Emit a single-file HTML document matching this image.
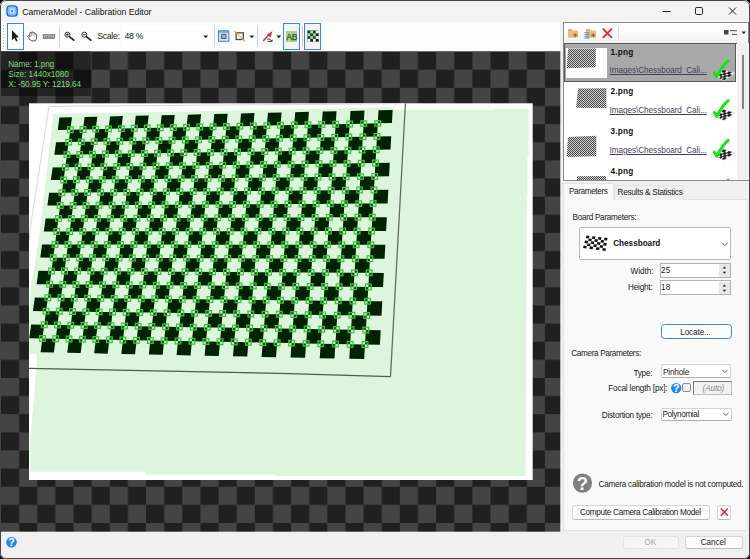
<!DOCTYPE html>
<html><head><meta charset="utf-8"><title>CameraModel - Calibration Editor</title>
<style>
html,body{margin:0;padding:0;background:#000;}
body{width:750px;height:559px;overflow:hidden;position:relative;font-family:"Liberation Sans",sans-serif;font-size:11px;color:#1a1a1a;}
#win{position:absolute;left:0;top:0;width:750px;height:559px;border-radius:6px;background:#f0f0f0;overflow:hidden;}
.abs{position:absolute;}
.t{position:absolute;white-space:nowrap;line-height:14px;height:14px;margin-top:-7px;}
.tr{position:absolute;white-space:nowrap;line-height:14px;height:14px;margin-top:-7px;text-align:right;}
#titlebar{position:absolute;left:0;top:0;width:750px;height:22px;background:#f3f3f3;}
#toolbar{position:absolute;left:0;top:22px;width:560.3px;height:29.3px;background:#fcfcfc;}
.sep{position:absolute;width:1px;background:#d0d0d0;top:26px;height:21px;}
.selbtn{position:absolute;border:1px solid #2f8ae0;background:#fdfeff;box-sizing:border-box;}
.btn{position:absolute;box-sizing:border-box;border:1px solid #d4d4d4;border-bottom-color:#bcbcbc;border-radius:3px;background:#fdfdfd;text-align:center;}
.combo{position:absolute;box-sizing:border-box;border:1px solid #d2d2d2;border-bottom-color:#b0b0b0;border-radius:2px;background:#fff;}
.link{color:#483f55;text-decoration:underline;}
</style></head><body>
<div id="win">
<div id="titlebar"></div>
<div id="toolbar"></div>
<svg class="cv" width="750" height="559" viewBox="0 0 750 559" style="position:absolute;left:0;top:0">
<defs><pattern id="ck" x="1.0" y="51.599999999999994" width="36.26" height="36.26" patternUnits="userSpaceOnUse"><rect width="36.26" height="36.26" fill="#444444"/><rect x="18.13" width="18.13" height="18.13" fill="#202020"/><rect y="18.13" width="18.13" height="18.13" fill="#202020"/></pattern><filter id="bl" x="-5%" y="-5%" width="110%" height="110%"><feGaussianBlur stdDeviation="0.7"/></filter><clipPath id="cc"><rect x="0.7" y="51.3" width="559.5999999999999" height="480.40000000000003"/></clipPath></defs>
<rect x="0.7" y="51.3" width="559.6" height="480.4" fill="url(#ck)"/>
<rect x="29" y="103.3" width="503.7" height="376.7" fill="#ffffff"/>
<polygon fill="#ddf5dc" points="53.5,114 394,107.2 394,110 493,110 493,108.8 528.7,108.8 528.7,157 527.5,157 527.5,196 526.7,196 526.4,300 525.8,476 275,476 275,474.7 145,474.7 145,471.8 30.2,471.8 30.5,441 32.1,418 34.4,395 36,369.5 36.8,369.5 36.8,354 29.4,354 29.4,318 31.3,284 38.7,240"/>
<polyline fill="none" stroke="#dcdedc" stroke-width="1.2" points="29.5,240 30,230 49,106.4 405.4,103.6"/>
<polyline fill="none" stroke="#626e62" stroke-width="1.3" points="405.4,103.5 397.4,250 390.5,376.7"/>
<polyline fill="none" stroke="#4f5b4f" stroke-width="1.3" points="29,368.3 280,373.4 390.5,376.7"/>
<path filter="url(#bl)" fill="#052005" d="M59.41,117.57 71.98,117.29 70.33,129.66 57.72,129.92zM56.03,142.33 68.67,142.1 67,154.63 54.32,154.83zM52.6,167.4 65.31,167.23 63.62,179.91 50.87,180.05zM49.13,192.78 61.91,192.66 60.2,205.5 47.38,205.58zM45.62,218.47 58.47,218.42 56.73,231.42 43.84,231.44zM42.06,244.49 54.99,244.5 53.23,257.66 40.26,257.62zM38.46,270.83 51.46,270.91 49.68,284.24 36.64,284.13zM34.81,297.52 47.88,297.66 46.08,311.16 32.97,310.98zM31.11,324.54 44.26,324.75 42.43,338.43 29.25,338.18zM70.33,129.66 83,129.4 81.37,141.87 68.67,142.1zM67,154.63 79.73,154.42 78.08,167.05 65.31,167.23zM63.62,179.91 76.43,179.76 74.76,192.55 61.91,192.66zM60.2,205.5 73.08,205.42 71.39,218.37 58.47,218.42zM56.73,231.42 69.69,231.4 67.98,244.51 54.99,244.5zM53.23,257.66 66.25,257.71 64.52,270.99 51.46,270.91zM49.68,284.24 62.78,284.35 61.02,297.81 47.88,297.66zM46.08,311.16 59.25,311.34 57.48,324.97 44.26,324.75zM42.43,338.43 55.69,338.68 53.89,352.48 40.59,352.2zM84.62,117 97.31,116.71 95.73,129.14 83,129.4zM81.37,141.87 94.13,141.64 92.53,154.22 79.73,154.42zM78.08,167.05 90.92,166.88 89.3,179.62 76.43,179.76zM74.76,192.55 87.66,192.44 86.02,205.34 73.08,205.42zM71.39,218.37 84.37,218.32 82.7,231.38 69.69,231.4zM67.98,244.51 81.03,244.53 79.35,257.76 66.25,257.71zM64.52,270.99 77.65,271.07 75.94,284.47 62.78,284.35zM61.02,297.81 74.23,297.95 72.5,311.52 59.25,311.34zM57.48,324.97 70.76,325.18 69.01,338.93 55.69,338.68zM95.73,129.14 108.52,128.87 106.96,141.41 94.13,141.64zM92.53,154.22 105.39,154.02 103.82,166.71 90.92,166.88zM89.3,179.62 102.23,179.48 100.63,192.33 87.66,192.44zM86.02,205.34 99.03,205.26 97.41,218.27 84.37,218.32zM82.7,231.38 95.79,231.36 94.15,244.54 81.03,244.53zM79.35,257.76 92.5,257.8 90.84,271.15 77.65,271.07zM75.94,284.47 89.17,284.58 87.5,298.1 74.23,297.95zM72.5,311.52 85.81,311.7 84.1,325.4 70.76,325.18zM69.01,338.93 82.39,339.18 80.67,353.05 67.24,352.77zM110.06,116.42 122.88,116.12 121.37,128.61 108.52,128.87zM106.96,141.41 119.85,141.17 118.32,153.81 105.39,154.02zM103.82,166.71 116.78,166.53 115.23,179.33 102.23,179.48zM100.63,192.33 113.67,192.21 112.1,205.17 99.03,205.26zM97.41,218.27 110.52,218.22 108.93,231.34 95.79,231.36zM94.15,244.54 107.33,244.55 105.72,257.85 92.5,257.8zM90.84,271.15 104.1,271.23 102.47,284.69 89.17,284.58zM87.5,298.1 100.83,298.25 99.18,311.89 85.81,311.7zM84.1,325.4 97.52,325.61 95.85,339.43 82.39,339.18zM121.37,128.61 134.28,128.34 132.79,140.94 119.85,141.17zM118.32,153.81 131.3,153.61 129.8,166.36 116.78,166.53zM115.23,179.33 128.29,179.19 126.76,192.1 113.67,192.21zM112.1,205.17 125.23,205.09 123.69,218.17 110.52,218.22zM108.93,231.34 122.14,231.33 120.58,244.57 107.33,244.55zM105.72,257.85 119.01,257.9 117.43,271.31 104.1,271.23zM102.47,284.69 115.84,284.81 114.24,298.39 100.83,298.25zM99.18,311.89 112.62,312.07 111,325.83 97.52,325.61zM95.85,339.43 109.37,339.69 107.72,353.63 94.16,353.34zM135.75,115.83 148.69,115.53 147.25,128.08 134.28,128.34zM132.79,140.94 145.8,140.7 144.35,153.4 131.3,153.61zM129.8,166.36 142.88,166.18 141.41,179.04 128.29,179.19zM126.76,192.1 139.92,191.98 138.43,205.01 125.23,205.09zM123.69,218.17 136.93,218.12 135.42,231.31 122.14,231.33zM120.58,244.57 133.89,244.58 132.36,257.94 119.01,257.9zM117.43,271.31 130.82,271.39 129.27,284.92 115.84,284.81zM114.24,298.39 127.71,298.54 126.13,312.25 112.62,312.07zM111,325.83 124.55,326.05 122.96,339.94 109.37,339.69zM147.25,128.08 160.29,127.81 158.88,140.46 145.8,140.7zM144.35,153.4 157.46,153.19 156.03,166 142.88,166.18zM141.41,179.04 154.59,178.9 153.15,191.87 139.92,191.98zM138.43,205.01 151.69,204.93 150.23,218.06 136.93,218.12zM135.42,231.31 148.76,231.29 147.27,244.6 133.89,244.58zM132.36,257.94 145.78,257.99 144.28,271.47 130.82,271.39zM129.27,284.92 142.77,285.04 141.24,298.69 127.71,298.54zM126.13,312.25 139.71,312.44 138.17,326.27 124.55,326.05zM122.96,339.94 136.62,340.2 135.06,354.21 121.36,353.92zM161.69,115.24 174.75,114.94 173.39,127.54 160.29,127.81zM158.88,140.46 172.02,140.22 170.63,152.98 157.46,153.19zM156.03,166 169.24,165.83 167.85,178.75 154.59,178.9zM153.15,191.87 166.44,191.75 165.02,204.84 151.69,204.93zM150.23,218.06 163.6,218.01 162.16,231.27 148.76,231.29zM147.27,244.6 160.72,244.61 159.27,258.04 145.78,257.99zM144.28,271.47 157.8,271.55 156.33,285.15 142.77,285.04zM141.24,298.69 154.85,298.84 153.36,312.62 139.71,312.44zM138.17,326.27 151.86,326.49 150.35,340.46 136.62,340.2zM173.39,127.54 186.55,127.27 185.22,139.98 172.02,140.22zM170.63,152.98 183.87,152.77 182.52,165.65 169.24,165.83zM167.85,178.75 181.16,178.6 179.79,191.64 166.44,191.75zM165.02,204.84 178.42,204.76 177.03,217.96 163.6,218.01zM162.16,231.27 175.64,231.25 174.23,244.62 160.72,244.61zM159.27,258.04 172.82,258.08 171.4,271.63 157.8,271.55zM156.33,285.15 169.97,285.27 168.52,298.99 154.85,298.84zM153.36,312.62 167.07,312.81 165.61,326.72 151.86,326.49zM150.35,340.46 164.15,340.71 162.67,354.8 148.83,354.51zM187.88,114.64 201.07,114.34 199.78,127 186.55,127.27zM185.22,139.98 198.48,139.74 197.18,152.56 183.87,152.77zM182.52,165.65 195.87,165.47 194.54,178.45 181.16,178.6zM179.79,191.64 193.22,191.52 191.88,204.67 178.42,204.76zM177.03,217.96 190.53,217.91 189.18,231.23 175.64,231.25zM174.23,244.62 187.81,244.64 186.44,258.13 172.82,258.08zM171.4,271.63 185.06,271.71 183.67,285.39 169.97,285.27zM168.52,298.99 182.27,299.15 180.86,313 167.07,312.81zM165.61,326.72 179.44,326.94 178.02,340.97 164.15,340.71zM199.78,127 213.07,126.73 211.81,139.5 198.48,139.74zM197.18,152.56 210.55,152.35 209.27,165.29 195.87,165.47zM194.54,178.45 207.99,178.3 206.7,191.4 193.22,191.52zM191.88,204.67 205.41,204.59 204.1,217.86 190.53,217.91zM189.18,231.23 202.79,231.21 201.46,244.65 187.81,244.64zM186.44,258.13 200.13,258.18 198.79,271.8 185.06,271.71zM183.67,285.39 197.44,285.5 196.08,299.3 182.27,299.15zM180.86,313 194.72,313.19 193.34,327.16 179.44,326.94zM178.02,340.97 191.96,341.24 190.56,355.4 176.58,355.1zM214.32,114.04 227.64,113.73 226.43,126.45 213.07,126.73zM211.81,139.5 225.21,139.25 223.98,152.14 210.55,152.35zM209.27,165.29 222.75,165.1 221.51,178.15 207.99,178.3zM206.7,191.4 220.26,191.28 219,204.5 205.41,204.59zM204.1,217.86 217.74,217.8 216.46,231.19 202.79,231.21zM201.46,244.65 215.18,244.67 213.89,258.23 200.13,258.18zM198.79,271.8 212.59,271.88 211.28,285.62 197.44,285.5zM196.08,299.3 209.97,299.45 208.64,313.38 194.72,313.19zM193.34,327.16 207.31,327.39 205.97,341.5 191.96,341.24zM226.43,126.45 239.85,126.18 238.67,139.01 225.21,139.25zM223.98,152.14 237.48,151.92 236.29,164.92 222.75,165.1zM221.51,178.15 235.09,178 233.88,191.17 220.26,191.28zM219,204.5 232.66,204.42 231.44,217.75 217.74,217.8zM216.46,231.19 230.21,231.17 228.97,244.68 215.18,244.67zM213.89,258.23 227.72,258.28 226.46,271.96 212.59,271.88zM211.28,285.62 225.2,285.74 223.92,299.61 209.97,299.45zM208.64,313.38 222.64,313.57 221.35,327.62 207.31,327.39zM205.97,341.5 220.05,341.76 218.75,356 204.62,355.7zM241.02,113.43 254.47,113.12 253.34,125.9 239.85,126.18zM238.67,139.01 252.2,138.76 251.05,151.71 237.48,151.92zM236.29,164.92 249.9,164.74 248.74,177.85 235.09,178zM233.88,191.17 247.57,191.05 246.4,204.33 232.66,204.42zM231.44,217.75 245.21,217.7 244.02,231.15 230.21,231.17zM228.97,244.68 242.82,244.69 241.62,258.33 227.72,258.28zM226.46,271.96 240.4,272.05 239.18,285.86 225.2,285.74zM223.92,299.61 237.95,299.76 236.71,313.76 222.64,313.57zM221.35,327.62 235.47,327.85 234.21,342.03 220.05,341.76zM253.34,125.9 266.89,125.62 265.79,138.52 252.2,138.76zM251.05,151.71 264.69,151.49 263.58,164.55 249.9,164.74zM248.74,177.85 262.46,177.7 261.33,190.93 247.57,191.05zM246.4,204.33 260.2,204.24 259.05,217.64 245.21,217.7zM244.02,231.15 257.91,231.13 256.75,244.71 242.82,244.69zM241.62,258.33 255.59,258.38 254.42,272.13 240.4,272.05zM239.18,285.86 253.24,285.98 252.05,299.92 237.95,299.76zM236.71,313.76 250.85,313.95 249.65,328.08 235.47,327.85zM234.21,342.03 248.44,342.3 247.22,356.61 232.95,356.31zM267.98,112.81 281.56,112.5 280.51,125.34 266.89,125.62zM265.79,138.52 279.45,138.27 278.39,151.28 264.69,151.49zM263.58,164.55 277.32,164.37 276.24,177.54 262.46,177.7zM261.33,190.93 275.16,190.81 274.07,204.15 260.2,204.24zM259.05,217.64 272.97,217.59 271.86,231.11 257.91,231.13zM256.75,244.71 270.75,244.72 269.63,258.43 255.59,258.38zM254.42,272.13 268.5,272.22 267.36,286.1 253.24,285.98zM252.05,299.92 266.22,300.08 265.07,314.14 250.85,313.95zM249.65,328.08 263.91,328.31 262.75,342.57 248.44,342.3zM280.51,125.34 294.2,125.06 293.18,138.02 279.45,138.27zM278.39,151.28 292.16,151.06 291.13,164.18 277.32,164.37zM276.24,177.54 290.1,177.39 289.05,190.69 275.16,190.81zM274.07,204.15 288.01,204.07 286.95,217.54 272.97,217.59zM271.86,231.11 285.89,231.09 284.82,244.74 270.75,244.72zM269.63,258.43 283.74,258.47 282.66,272.3 268.5,272.22zM267.36,286.1 281.56,286.22 280.47,300.23 266.22,300.08zM265.07,314.14 279.36,314.34 278.25,328.54 263.91,328.31zM262.75,342.57 277.13,342.83 276,357.23 261.57,356.92zM295.21,112.19 308.92,111.87 307.96,124.78 294.2,125.06zM293.18,138.02 306.98,137.77 306,150.84 292.16,151.06zM291.13,164.18 305.01,163.99 304.02,177.24 290.1,177.39zM289.05,190.69 303.02,190.56 302.02,203.98 288.01,204.07zM286.95,217.54 301,217.48 299.98,231.07 285.89,231.09zM284.82,244.74 298.96,244.75 297.92,258.52 283.74,258.47zM282.66,272.3 296.88,272.39 295.84,286.34 281.56,286.22zM280.47,300.23 294.78,300.39 293.72,314.53 279.36,314.34zM278.25,328.54 292.66,328.77 291.58,343.11 277.13,342.83zM307.96,124.78 321.78,124.5 320.85,137.51 306.98,137.77zM306,150.84 319.91,150.62 318.97,163.81 305.01,163.99zM304.02,177.24 318.02,177.08 317.06,190.44 303.02,190.56zM302.02,203.98 316.1,203.89 315.13,217.43 301,217.48zM299.98,231.07 314.15,231.05 313.17,244.77 298.96,244.75zM297.92,258.52 312.18,258.57 311.19,272.47 296.88,272.39zM295.84,286.34 310.18,286.47 309.18,300.55 294.78,300.39zM293.72,314.53 308.16,314.73 307.14,329.01 292.66,328.77zM291.58,343.11 306.11,343.38 305.07,357.85 290.5,357.54zM322.71,111.56 336.56,111.24 335.67,124.21 321.78,124.5zM320.85,137.51 334.78,137.26 333.89,150.4 319.91,150.62zM318.97,163.81 332.99,163.62 332.08,176.92 318.02,177.08zM317.06,190.44 331.17,190.32 330.25,203.8 316.1,203.89zM315.13,217.43 329.32,217.37 328.39,231.03 314.15,231.05zM313.17,244.77 327.46,244.78 326.51,258.63 312.18,258.57zM311.19,272.47 325.56,272.56 324.61,286.59 310.18,286.47zM309.18,300.55 323.64,300.71 322.67,314.93 308.16,314.73zM307.14,329.01 321.7,329.24 320.72,343.65 306.11,343.38zM335.67,124.21 349.64,123.92 348.79,137.01 334.78,137.26zM333.89,150.4 347.94,150.17 347.08,163.43 332.99,163.62zM332.08,176.92 346.22,176.77 345.35,190.2 331.17,190.32zM330.25,203.8 344.47,203.71 343.59,217.32 329.32,217.37zM328.39,231.03 342.71,231.01 341.81,244.8 327.46,244.78zM326.51,258.63 340.92,258.68 340.01,272.65 325.56,272.56zM324.61,286.59 339.1,286.71 338.19,300.87 323.64,300.71zM322.67,314.93 337.26,315.13 336.34,329.48 321.7,329.24zM320.72,343.65 335.4,343.93 334.46,358.48 319.73,358.16zM350.48,110.93 364.47,110.61 363.67,123.64 349.64,123.92zM348.79,137.01 362.87,136.75 362.06,149.95 347.94,150.17zM347.08,163.43 361.24,163.24 360.42,176.61 346.22,176.77zM345.35,190.2 359.6,190.07 358.77,203.62 344.47,203.71zM343.59,217.32 357.94,217.26 357.09,230.99 342.71,231.01zM341.81,244.8 356.25,244.81 355.4,258.73 340.92,258.68zM340.01,272.65 354.54,272.73 353.67,286.84 339.1,286.71zM338.19,300.87 352.81,301.03 351.93,315.33 337.26,315.13zM336.34,329.48 351.05,329.72 350.16,344.21 335.4,343.93zM363.67,123.64 377.77,123.35 377.01,136.49 362.87,136.75zM362.06,149.95 376.25,149.73 375.48,163.04 361.24,163.24zM360.42,176.61 374.71,176.45 373.93,189.95 359.6,190.07zM358.77,203.62 373.14,203.53 372.35,217.2 357.94,217.26zM357.09,230.99 371.56,230.97 370.76,244.83 356.25,244.81zM355.4,258.73 369.95,258.78 369.14,272.82 354.54,272.73zM353.67,286.84 368.32,286.96 367.5,301.2 352.81,301.03zM351.93,315.33 366.67,315.53 365.84,329.96 351.05,329.72zM350.16,344.21 365,344.48 364.16,359.11 349.27,358.79zM378.53,110.28 392.66,109.96 391.95,123.06 377.77,123.35zM377.01,136.49 391.23,136.23 390.51,149.5 376.25,149.73zM375.48,163.04 389.79,162.85 389.06,176.29 374.71,176.45zM373.93,189.95 388.32,189.82 387.59,203.44 373.14,203.53zM372.35,217.2 386.84,217.15 386.09,230.95 371.56,230.97zM370.76,244.83 385.34,244.84 384.58,258.83 369.95,258.78zM369.14,272.82 383.82,272.91 383.05,287.09 368.32,286.96zM367.5,301.2 382.27,301.36 381.49,315.73 366.67,315.53zM365.84,329.96 380.71,330.2 379.92,344.76 365,344.48z"/>
<path fill="#8fe88f" fill-opacity="0.22" stroke="#2fcc2f" stroke-width="1.25" d="M67.48,126.81h5.7v5.7h-5.7zM65.82,139.25h5.7v5.7h-5.7zM64.15,151.78h5.7v5.7h-5.7zM62.46,164.38h5.7v5.7h-5.7zM60.77,177.06h5.7v5.7h-5.7zM59.06,189.81h5.7v5.7h-5.7zM57.35,202.65h5.7v5.7h-5.7zM55.62,215.57h5.7v5.7h-5.7zM53.88,228.57h5.7v5.7h-5.7zM52.14,241.65h5.7v5.7h-5.7zM50.38,254.81h5.7v5.7h-5.7zM48.61,268.06h5.7v5.7h-5.7zM46.83,281.39h5.7v5.7h-5.7zM45.03,294.81h5.7v5.7h-5.7zM43.23,308.31h5.7v5.7h-5.7zM41.41,321.9h5.7v5.7h-5.7zM39.58,335.58h5.7v5.7h-5.7zM80.15,126.55h5.7v5.7h-5.7zM78.52,139.02h5.7v5.7h-5.7zM76.88,151.57h5.7v5.7h-5.7zM75.23,164.2h5.7v5.7h-5.7zM73.58,176.91h5.7v5.7h-5.7zM71.91,189.7h5.7v5.7h-5.7zM70.23,202.57h5.7v5.7h-5.7zM68.54,215.52h5.7v5.7h-5.7zM66.84,228.55h5.7v5.7h-5.7zM65.13,241.66h5.7v5.7h-5.7zM63.4,254.86h5.7v5.7h-5.7zM61.67,268.14h5.7v5.7h-5.7zM59.93,281.5h5.7v5.7h-5.7zM58.17,294.96h5.7v5.7h-5.7zM56.4,308.49h5.7v5.7h-5.7zM54.63,322.12h5.7v5.7h-5.7zM52.84,335.83h5.7v5.7h-5.7zM92.88,126.29h5.7v5.7h-5.7zM91.28,138.79h5.7v5.7h-5.7zM89.68,151.37h5.7v5.7h-5.7zM88.07,164.03h5.7v5.7h-5.7zM86.45,176.77h5.7v5.7h-5.7zM84.81,189.59h5.7v5.7h-5.7zM83.17,202.49h5.7v5.7h-5.7zM81.52,215.47h5.7v5.7h-5.7zM79.85,228.53h5.7v5.7h-5.7zM78.18,241.68h5.7v5.7h-5.7zM76.5,254.91h5.7v5.7h-5.7zM74.8,268.22h5.7v5.7h-5.7zM73.09,281.62h5.7v5.7h-5.7zM71.38,295.1h5.7v5.7h-5.7zM69.65,308.67h5.7v5.7h-5.7zM67.91,322.33h5.7v5.7h-5.7zM66.16,336.08h5.7v5.7h-5.7zM105.67,126.02h5.7v5.7h-5.7zM104.11,138.56h5.7v5.7h-5.7zM102.54,151.17h5.7v5.7h-5.7zM100.97,163.86h5.7v5.7h-5.7zM99.38,176.63h5.7v5.7h-5.7zM97.78,189.48h5.7v5.7h-5.7zM96.18,202.41h5.7v5.7h-5.7zM94.56,215.42h5.7v5.7h-5.7zM92.94,228.51h5.7v5.7h-5.7zM91.3,241.69h5.7v5.7h-5.7zM89.65,254.95h5.7v5.7h-5.7zM87.99,268.3h5.7v5.7h-5.7zM86.32,281.73h5.7v5.7h-5.7zM84.65,295.25h5.7v5.7h-5.7zM82.96,308.85h5.7v5.7h-5.7zM81.25,322.55h5.7v5.7h-5.7zM79.54,336.33h5.7v5.7h-5.7zM118.52,125.76h5.7v5.7h-5.7zM117,138.32h5.7v5.7h-5.7zM115.47,150.96h5.7v5.7h-5.7zM113.93,163.68h5.7v5.7h-5.7zM112.38,176.48h5.7v5.7h-5.7zM110.82,189.36h5.7v5.7h-5.7zM109.25,202.32h5.7v5.7h-5.7zM107.67,215.37h5.7v5.7h-5.7zM106.08,228.49h5.7v5.7h-5.7zM104.48,241.7h5.7v5.7h-5.7zM102.87,255h5.7v5.7h-5.7zM101.25,268.38h5.7v5.7h-5.7zM99.62,281.84h5.7v5.7h-5.7zM97.98,295.4h5.7v5.7h-5.7zM96.33,309.04h5.7v5.7h-5.7zM94.67,322.76h5.7v5.7h-5.7zM93,336.58h5.7v5.7h-5.7zM131.43,125.49h5.7v5.7h-5.7zM129.94,138.09h5.7v5.7h-5.7zM128.45,150.76h5.7v5.7h-5.7zM126.95,163.51h5.7v5.7h-5.7zM125.44,176.34h5.7v5.7h-5.7zM123.91,189.25h5.7v5.7h-5.7zM122.38,202.24h5.7v5.7h-5.7zM120.84,215.32h5.7v5.7h-5.7zM119.29,228.48h5.7v5.7h-5.7zM117.73,241.72h5.7v5.7h-5.7zM116.16,255.05h5.7v5.7h-5.7zM114.58,268.46h5.7v5.7h-5.7zM112.99,281.96h5.7v5.7h-5.7zM111.39,295.54h5.7v5.7h-5.7zM109.77,309.22h5.7v5.7h-5.7zM108.15,322.98h5.7v5.7h-5.7zM106.52,336.84h5.7v5.7h-5.7zM144.4,125.23h5.7v5.7h-5.7zM142.95,137.85h5.7v5.7h-5.7zM141.5,150.55h5.7v5.7h-5.7zM140.03,163.33h5.7v5.7h-5.7zM138.56,176.19h5.7v5.7h-5.7zM137.07,189.13h5.7v5.7h-5.7zM135.58,202.16h5.7v5.7h-5.7zM134.08,215.27h5.7v5.7h-5.7zM132.57,228.46h5.7v5.7h-5.7zM131.04,241.73h5.7v5.7h-5.7zM129.51,255.09h5.7v5.7h-5.7zM127.97,268.54h5.7v5.7h-5.7zM126.42,282.07h5.7v5.7h-5.7zM124.86,295.69h5.7v5.7h-5.7zM123.28,309.4h5.7v5.7h-5.7zM121.7,323.2h5.7v5.7h-5.7zM120.11,337.09h5.7v5.7h-5.7zM157.44,124.96h5.7v5.7h-5.7zM156.03,137.61h5.7v5.7h-5.7zM154.61,150.34h5.7v5.7h-5.7zM153.18,163.15h5.7v5.7h-5.7zM151.74,176.05h5.7v5.7h-5.7zM150.3,189.02h5.7v5.7h-5.7zM148.84,202.08h5.7v5.7h-5.7zM147.38,215.21h5.7v5.7h-5.7zM145.91,228.44h5.7v5.7h-5.7zM144.42,241.75h5.7v5.7h-5.7zM142.93,255.14h5.7v5.7h-5.7zM141.43,268.62h5.7v5.7h-5.7zM139.92,282.19h5.7v5.7h-5.7zM138.39,295.84h5.7v5.7h-5.7zM136.86,309.59h5.7v5.7h-5.7zM135.32,323.42h5.7v5.7h-5.7zM133.77,337.35h5.7v5.7h-5.7zM170.54,124.69h5.7v5.7h-5.7zM169.17,137.37h5.7v5.7h-5.7zM167.78,150.13h5.7v5.7h-5.7zM166.39,162.98h5.7v5.7h-5.7zM165,175.9h5.7v5.7h-5.7zM163.59,188.9h5.7v5.7h-5.7zM162.17,201.99h5.7v5.7h-5.7zM160.75,215.16h5.7v5.7h-5.7zM159.31,228.42h5.7v5.7h-5.7zM157.87,241.76h5.7v5.7h-5.7zM156.42,255.19h5.7v5.7h-5.7zM154.95,268.7h5.7v5.7h-5.7zM153.48,282.3h5.7v5.7h-5.7zM152,295.99h5.7v5.7h-5.7zM150.51,309.77h5.7v5.7h-5.7zM149.01,323.64h5.7v5.7h-5.7zM147.5,337.61h5.7v5.7h-5.7zM183.7,124.42h5.7v5.7h-5.7zM182.37,137.13h5.7v5.7h-5.7zM181.02,149.92h5.7v5.7h-5.7zM179.67,162.8h5.7v5.7h-5.7zM178.31,175.75h5.7v5.7h-5.7zM176.94,188.79h5.7v5.7h-5.7zM175.57,201.91h5.7v5.7h-5.7zM174.18,215.11h5.7v5.7h-5.7zM172.79,228.4h5.7v5.7h-5.7zM171.38,241.77h5.7v5.7h-5.7zM169.97,255.23h5.7v5.7h-5.7zM168.55,268.78h5.7v5.7h-5.7zM167.12,282.42h5.7v5.7h-5.7zM165.67,296.14h5.7v5.7h-5.7zM164.22,309.96h5.7v5.7h-5.7zM162.76,323.87h5.7v5.7h-5.7zM161.3,337.86h5.7v5.7h-5.7zM196.93,124.15h5.7v5.7h-5.7zM195.63,136.89h5.7v5.7h-5.7zM194.33,149.71h5.7v5.7h-5.7zM193.02,162.62h5.7v5.7h-5.7zM191.69,175.6h5.7v5.7h-5.7zM190.37,188.67h5.7v5.7h-5.7zM189.03,201.82h5.7v5.7h-5.7zM187.68,215.06h5.7v5.7h-5.7zM186.33,228.38h5.7v5.7h-5.7zM184.96,241.79h5.7v5.7h-5.7zM183.59,255.28h5.7v5.7h-5.7zM182.21,268.86h5.7v5.7h-5.7zM180.82,282.54h5.7v5.7h-5.7zM179.42,296.3h5.7v5.7h-5.7zM178.01,310.15h5.7v5.7h-5.7zM176.59,324.09h5.7v5.7h-5.7zM175.17,338.12h5.7v5.7h-5.7zM210.22,123.88h5.7v5.7h-5.7zM208.96,136.65h5.7v5.7h-5.7zM207.7,149.5h5.7v5.7h-5.7zM206.42,162.44h5.7v5.7h-5.7zM205.14,175.45h5.7v5.7h-5.7zM203.85,188.55h5.7v5.7h-5.7zM202.56,201.74h5.7v5.7h-5.7zM201.25,215.01h5.7v5.7h-5.7zM199.94,228.36h5.7v5.7h-5.7zM198.61,241.8h5.7v5.7h-5.7zM197.28,255.33h5.7v5.7h-5.7zM195.94,268.95h5.7v5.7h-5.7zM194.59,282.65h5.7v5.7h-5.7zM193.23,296.45h5.7v5.7h-5.7zM191.87,310.34h5.7v5.7h-5.7zM190.49,324.31h5.7v5.7h-5.7zM189.11,338.39h5.7v5.7h-5.7zM223.58,123.6h5.7v5.7h-5.7zM222.36,136.4h5.7v5.7h-5.7zM221.13,149.29h5.7v5.7h-5.7zM219.9,162.25h5.7v5.7h-5.7zM218.66,175.3h5.7v5.7h-5.7zM217.41,188.43h5.7v5.7h-5.7zM216.15,201.65h5.7v5.7h-5.7zM214.89,214.95h5.7v5.7h-5.7zM213.61,228.34h5.7v5.7h-5.7zM212.33,241.82h5.7v5.7h-5.7zM211.04,255.38h5.7v5.7h-5.7zM209.74,269.03h5.7v5.7h-5.7zM208.43,282.77h5.7v5.7h-5.7zM207.12,296.6h5.7v5.7h-5.7zM205.79,310.53h5.7v5.7h-5.7zM204.46,324.54h5.7v5.7h-5.7zM203.12,338.65h5.7v5.7h-5.7zM237,123.33h5.7v5.7h-5.7zM235.82,136.16h5.7v5.7h-5.7zM234.63,149.07h5.7v5.7h-5.7zM233.44,162.07h5.7v5.7h-5.7zM232.24,175.15h5.7v5.7h-5.7zM231.03,188.32h5.7v5.7h-5.7zM229.81,201.57h5.7v5.7h-5.7zM228.59,214.9h5.7v5.7h-5.7zM227.36,228.32h5.7v5.7h-5.7zM226.12,241.83h5.7v5.7h-5.7zM224.87,255.43h5.7v5.7h-5.7zM223.61,269.11h5.7v5.7h-5.7zM222.35,282.89h5.7v5.7h-5.7zM221.07,296.76h5.7v5.7h-5.7zM219.79,310.72h5.7v5.7h-5.7zM218.5,324.77h5.7v5.7h-5.7zM217.2,338.91h5.7v5.7h-5.7zM250.49,123.05h5.7v5.7h-5.7zM249.35,135.91h5.7v5.7h-5.7zM248.2,148.86h5.7v5.7h-5.7zM247.05,161.89h5.7v5.7h-5.7zM245.89,175h5.7v5.7h-5.7zM244.72,188.2h5.7v5.7h-5.7zM243.55,201.48h5.7v5.7h-5.7zM242.36,214.85h5.7v5.7h-5.7zM241.17,228.3h5.7v5.7h-5.7zM239.97,241.84h5.7v5.7h-5.7zM238.77,255.48h5.7v5.7h-5.7zM237.55,269.2h5.7v5.7h-5.7zM236.33,283.01h5.7v5.7h-5.7zM235.1,296.91h5.7v5.7h-5.7zM233.86,310.91h5.7v5.7h-5.7zM232.62,325h5.7v5.7h-5.7zM231.36,339.18h5.7v5.7h-5.7zM264.04,122.77h5.7v5.7h-5.7zM262.94,135.67h5.7v5.7h-5.7zM261.84,148.64h5.7v5.7h-5.7zM260.73,161.7h5.7v5.7h-5.7zM259.61,174.85h5.7v5.7h-5.7zM258.48,188.08h5.7v5.7h-5.7zM257.35,201.39h5.7v5.7h-5.7zM256.2,214.79h5.7v5.7h-5.7zM255.06,228.28h5.7v5.7h-5.7zM253.9,241.86h5.7v5.7h-5.7zM252.74,255.53h5.7v5.7h-5.7zM251.57,269.28h5.7v5.7h-5.7zM250.39,283.13h5.7v5.7h-5.7zM249.2,297.07h5.7v5.7h-5.7zM248,311.1h5.7v5.7h-5.7zM246.8,325.23h5.7v5.7h-5.7zM245.59,339.45h5.7v5.7h-5.7zM277.66,122.49h5.7v5.7h-5.7zM276.6,135.42h5.7v5.7h-5.7zM275.54,148.43h5.7v5.7h-5.7zM274.47,161.52h5.7v5.7h-5.7zM273.39,174.69h5.7v5.7h-5.7zM272.31,187.96h5.7v5.7h-5.7zM271.22,201.3h5.7v5.7h-5.7zM270.12,214.74h5.7v5.7h-5.7zM269.01,228.26h5.7v5.7h-5.7zM267.9,241.87h5.7v5.7h-5.7zM266.78,255.58h5.7v5.7h-5.7zM265.65,269.37h5.7v5.7h-5.7zM264.51,283.25h5.7v5.7h-5.7zM263.37,297.23h5.7v5.7h-5.7zM262.22,311.29h5.7v5.7h-5.7zM261.06,325.46h5.7v5.7h-5.7zM259.9,339.72h5.7v5.7h-5.7zM291.35,122.21h5.7v5.7h-5.7zM290.33,135.17h5.7v5.7h-5.7zM289.31,148.21h5.7v5.7h-5.7zM288.28,161.33h5.7v5.7h-5.7zM287.25,174.54h5.7v5.7h-5.7zM286.2,187.84h5.7v5.7h-5.7zM285.16,201.22h5.7v5.7h-5.7zM284.1,214.69h5.7v5.7h-5.7zM283.04,228.24h5.7v5.7h-5.7zM281.97,241.89h5.7v5.7h-5.7zM280.89,255.62h5.7v5.7h-5.7zM279.81,269.45h5.7v5.7h-5.7zM278.71,283.37h5.7v5.7h-5.7zM277.62,297.38h5.7v5.7h-5.7zM276.51,311.49h5.7v5.7h-5.7zM275.4,325.69h5.7v5.7h-5.7zM274.28,339.98h5.7v5.7h-5.7zM305.11,121.93h5.7v5.7h-5.7zM304.13,134.92h5.7v5.7h-5.7zM303.15,147.99h5.7v5.7h-5.7zM302.16,161.14h5.7v5.7h-5.7zM301.17,174.39h5.7v5.7h-5.7zM300.17,187.71h5.7v5.7h-5.7zM299.17,201.13h5.7v5.7h-5.7zM298.15,214.63h5.7v5.7h-5.7zM297.13,228.22h5.7v5.7h-5.7zM296.11,241.9h5.7v5.7h-5.7zM295.07,255.67h5.7v5.7h-5.7zM294.03,269.54h5.7v5.7h-5.7zM292.99,283.49h5.7v5.7h-5.7zM291.93,297.54h5.7v5.7h-5.7zM290.87,311.68h5.7v5.7h-5.7zM289.81,325.92h5.7v5.7h-5.7zM288.73,340.26h5.7v5.7h-5.7zM318.93,121.65h5.7v5.7h-5.7zM318,134.66h5.7v5.7h-5.7zM317.06,147.77h5.7v5.7h-5.7zM316.12,160.96h5.7v5.7h-5.7zM315.17,174.23h5.7v5.7h-5.7zM314.21,187.59h5.7v5.7h-5.7zM313.25,201.04h5.7v5.7h-5.7zM312.28,214.58h5.7v5.7h-5.7zM311.3,228.2h5.7v5.7h-5.7zM310.32,241.92h5.7v5.7h-5.7zM309.33,255.72h5.7v5.7h-5.7zM308.34,269.62h5.7v5.7h-5.7zM307.33,283.62h5.7v5.7h-5.7zM306.33,297.7h5.7v5.7h-5.7zM305.31,311.88h5.7v5.7h-5.7zM304.29,326.16h5.7v5.7h-5.7zM303.26,340.53h5.7v5.7h-5.7zM332.82,121.36h5.7v5.7h-5.7zM331.93,134.41h5.7v5.7h-5.7zM331.04,147.55h5.7v5.7h-5.7zM330.14,160.77h5.7v5.7h-5.7zM329.23,174.07h5.7v5.7h-5.7zM328.32,187.47h5.7v5.7h-5.7zM327.4,200.95h5.7v5.7h-5.7zM326.47,214.52h5.7v5.7h-5.7zM325.54,228.18h5.7v5.7h-5.7zM324.61,241.93h5.7v5.7h-5.7zM323.66,255.78h5.7v5.7h-5.7zM322.71,269.71h5.7v5.7h-5.7zM321.76,283.74h5.7v5.7h-5.7zM320.79,297.86h5.7v5.7h-5.7zM319.82,312.08h5.7v5.7h-5.7zM318.85,326.39h5.7v5.7h-5.7zM317.87,340.8h5.7v5.7h-5.7zM346.79,121.07h5.7v5.7h-5.7zM345.94,134.16h5.7v5.7h-5.7zM345.09,147.32h5.7v5.7h-5.7zM344.23,160.58h5.7v5.7h-5.7zM343.37,173.92h5.7v5.7h-5.7zM342.5,187.35h5.7v5.7h-5.7zM341.62,200.86h5.7v5.7h-5.7zM340.74,214.47h5.7v5.7h-5.7zM339.86,228.16h5.7v5.7h-5.7zM338.96,241.95h5.7v5.7h-5.7zM338.07,255.83h5.7v5.7h-5.7zM337.16,269.8h5.7v5.7h-5.7zM336.25,283.86h5.7v5.7h-5.7zM335.34,298.02h5.7v5.7h-5.7zM334.41,312.28h5.7v5.7h-5.7zM333.49,326.63h5.7v5.7h-5.7zM332.55,341.08h5.7v5.7h-5.7zM360.82,120.79h5.7v5.7h-5.7zM360.02,133.9h5.7v5.7h-5.7zM359.21,147.1h5.7v5.7h-5.7zM358.39,160.39h5.7v5.7h-5.7zM357.57,173.76h5.7v5.7h-5.7zM356.75,187.22h5.7v5.7h-5.7zM355.92,200.77h5.7v5.7h-5.7zM355.09,214.41h5.7v5.7h-5.7zM354.24,228.14h5.7v5.7h-5.7zM353.4,241.96h5.7v5.7h-5.7zM352.55,255.88h5.7v5.7h-5.7zM351.69,269.88h5.7v5.7h-5.7zM350.82,283.99h5.7v5.7h-5.7zM349.96,298.18h5.7v5.7h-5.7zM349.08,312.48h5.7v5.7h-5.7zM348.2,326.87h5.7v5.7h-5.7zM347.31,341.36h5.7v5.7h-5.7zM374.92,120.5h5.7v5.7h-5.7zM374.16,133.64h5.7v5.7h-5.7zM373.4,146.88h5.7v5.7h-5.7zM372.63,160.19h5.7v5.7h-5.7zM371.86,173.6h5.7v5.7h-5.7zM371.08,187.1h5.7v5.7h-5.7zM370.29,200.68h5.7v5.7h-5.7zM369.5,214.35h5.7v5.7h-5.7zM368.71,228.12h5.7v5.7h-5.7zM367.91,241.98h5.7v5.7h-5.7zM367.1,255.93h5.7v5.7h-5.7zM366.29,269.97h5.7v5.7h-5.7zM365.47,284.11h5.7v5.7h-5.7zM364.65,298.35h5.7v5.7h-5.7zM363.82,312.68h5.7v5.7h-5.7zM362.99,327.11h5.7v5.7h-5.7zM362.15,341.63h5.7v5.7h-5.7z"/>
<rect x="0.7" y="51.3" width="90" height="44.7" fill="#000" fill-opacity="0.45"/>
</svg>
<svg class="abs" style="left:5px;top:4px" width="15" height="15" viewBox="0 0 15 15">
<rect x="1.3" y="1.2" width="11.6" height="11.6" rx="3.6" fill="#1170e6"/>
<rect x="2.7" y="2.6" width="8.8" height="8.8" rx="2.4" fill="#8fc0ff"/>
<rect x="4.2" y="4.1" width="5.8" height="5.8" rx="1" fill="#c4defe" stroke="#6aa9f7" stroke-width="0.6"/>
<rect x="6.3" y="6.4" width="1.6" height="1.4" fill="#0b3fa8"/></svg>
<span class="t" style="left:22.2px;top:12.1px;font-size:8.7px;color:#111;letter-spacing:0.013px;" id="title">CameraModel - Calibration Editor</span>
<svg class="abs" style="left:650px;top:0" width="100" height="22" viewBox="0 0 100 22">
<path d="M12.5 11.5h8" stroke="#222" stroke-width="1" fill="none"/>
<rect x="45.5" y="7.5" width="7" height="7" rx="1.2" stroke="#222" stroke-width="1" fill="none"/>
<path d="M79 7.5l7 7M86 7.5l-7 7" stroke="#222" stroke-width="1" fill="none"/></svg>
<svg class="abs" style="left:2px;top:24px" width="3" height="25" viewBox="0 0 3 25"><rect x="1" y="1" width="1" height="1" fill="#b5b5b5"/><rect x="1" y="4" width="1" height="1" fill="#b5b5b5"/><rect x="1" y="7" width="1" height="1" fill="#b5b5b5"/><rect x="1" y="10" width="1" height="1" fill="#b5b5b5"/><rect x="1" y="13" width="1" height="1" fill="#b5b5b5"/><rect x="1" y="16" width="1" height="1" fill="#b5b5b5"/><rect x="1" y="19" width="1" height="1" fill="#b5b5b5"/><rect x="1" y="22" width="1" height="1" fill="#b5b5b5"/></svg>
<div class="selbtn" style="left:7px;top:23.1px;width:16.6px;height:26.7px;"></div>
<svg class="abs" style="left:10px;top:29px" width="12" height="15" viewBox="0 0 12 15">
<path d="M2 1.2 L2 11.2 L4.4 9 L6.1 12.6 L7.6 11.9 L6 8.4 L9 8.2 Z" fill="#1d1d1d"/></svg>
<svg class="abs" style="left:26px;top:30px" width="13" height="13" viewBox="0 0 13 13">
<path d="M5.200 10.900 L2 7.200 Q1.300 6.200 2.100 5.700 Q2.900 5.400 3.900 6.800 L3.700 3.400 Q3.700 2.500 4.450 2.500 Q5.200 2.500 5.300 3.400 L5.300 2.700 Q5.400 1.900 6.200 1.900 Q7 1.900 7.100 2.800 L7.200 3.100 Q7.300 2.400 8.100 2.500 Q8.900 2.600 8.900 3.500 L9 4.200 Q9.300 3.700 9.900 3.900 Q10.600 4.100 10.600 5 L10.500 8 Q10.400 9.700 9.300 10.900 Z" fill="#fff" stroke="#444" stroke-width="0.9" stroke-linejoin="round"/>
<path d="M5.300 3.400v3M7.100 3v3.300M8.900 3.800v2.800" stroke="#777" stroke-width="0.6"/></svg>
<svg class="abs" style="left:41px;top:33px" width="16" height="8" viewBox="0 0 16 8">
<rect x="2.2" y="1.7" width="11.2" height="3.6" fill="#aeb5bf" stroke="#6d7682" stroke-width="0.9"/>
<path d="M4.500 3.200v2M6.700 3.200v2M8.900 3.200v2M11.100 3.200v2" stroke="#59616b" stroke-width="0.7"/></svg>
<div class="abs" style="left:59px;top:26px;width:1px;height:21px;background:#cfcfcf;"></div>
<svg class="abs" style="left:64px;top:30px" width="13" height="12" viewBox="0 0 13 12"><circle cx="3.4" cy="4.7" r="2.5" fill="#fff" stroke="#333" stroke-width="1"/><path d="M5.6 6.9 L9.8 10.2" stroke="#222" stroke-width="1.7" stroke-linecap="round"/><path d="M2 4.7h2.8" stroke="#222" stroke-width="0.9"/><path d="M3.4 3.3v2.8" stroke="#222" stroke-width="0.9"/></svg>
<svg class="abs" style="left:80.7px;top:30px" width="13" height="12" viewBox="0 0 13 12"><circle cx="3.4" cy="4.7" r="2.5" fill="#fff" stroke="#333" stroke-width="1"/><path d="M5.6 6.9 L9.8 10.2" stroke="#222" stroke-width="1.7" stroke-linecap="round"/><path d="M2 4.7h2.8" stroke="#222" stroke-width="0.9"/></svg>
<span class="t" style="left:97.2px;top:36.3px;font-size:8.7px;letter-spacing:-0.283px;" id="scale">Scale:</span>
<div class="abs" style="left:121.5px;top:26px;width:91.5px;height:20.5px;background:#fff;"></div>
<span class="t" style="left:124.4px;top:36.0px;font-size:8.7px;letter-spacing:-0.225px;" id="pct">48 %</span>
<svg class="abs" style="left:203px;top:35px" width="6" height="4" viewBox="0 0 6 4"><path d="M0.3 0.5h5L2.8 3.3z" fill="#222"/></svg>
<div class="abs" style="left:213.6px;top:26px;width:1px;height:21px;background:#cfcfcf;"></div>
<svg class="abs" style="left:217px;top:30px" width="14" height="13" viewBox="0 0 14 13">
<rect x="1.500" y="0.800" width="10.300" height="10.500" fill="#d6e7fa" stroke="#3a8ae0" stroke-width="1.1"/>
<path d="M1.500 2h10.300" stroke="#3a8ae0" stroke-width="1.2"/>
<rect x="4.600" y="4.300" width="4.300" height="4.200" fill="#b0b0b0" stroke="#5a5a5a" stroke-width="1"/></svg>
<svg class="abs" style="left:234px;top:30px" width="13" height="13" viewBox="0 0 13 13">
<rect x="2.1" y="2.800" width="7.200" height="6.700" fill="#fff" stroke="#4a4a4a" stroke-width="1.3"/>
<path d="M0.300 0.800L11.200 11.700" stroke="#f0a830" stroke-width="1.2"/></svg>
<svg class="abs" style="left:249px;top:35px" width="6" height="4" viewBox="0 0 6 4"><path d="M0.3 0.5h5L2.8 3.3z" fill="#222"/></svg>
<div class="abs" style="left:257.3px;top:26px;width:1px;height:21px;background:#cfcfcf;"></div>
<svg class="abs" style="left:262px;top:30px" width="14" height="13" viewBox="0 0 14 13">
<path d="M1.200 11 L7 4.800" stroke="#cc3c3c" stroke-width="1.500" fill="none"/>
<path d="M4.800 4.600 L10.400 1.300 L8.600 7.600 Z" fill="#cc3c3c"/>
<path d="M5.200 9.200 q2.200-.800 3 .600 t2.600 .400 M5.600 11.400 h4.800" stroke="#222" stroke-width="0.9" fill="none"/></svg>
<svg class="abs" style="left:276px;top:35px" width="6" height="4" viewBox="0 0 6 4"><path d="M0.3 0.5h5L2.8 3.3z" fill="#222"/></svg>
<div class="selbtn" style="left:283.1px;top:23.1px;width:16.7px;height:26.7px;background:#f4f4f4;"></div>
<div class="abs" style="left:285.7px;top:31px;width:11.4px;height:10.5px;background:#a9d08e;"></div>
<span class="t" style="left:286.3px;top:36.5px;font-size:8.6px;color:#2f5a20;letter-spacing:-0.3px;-webkit-text-stroke:0.25px #2f5a20;" id="ab">AB</span>
<div class="abs" style="left:301.8px;top:26px;width:1px;height:21px;background:#cfcfcf;"></div>
<div class="selbtn" style="left:304px;top:23.1px;width:16.7px;height:26.7px;background:#f4f4f4;"></div>
<svg class="abs" style="left:306.500px;top:30.100px" width="12" height="12" viewBox="0 0 12 12"><rect x="0.2" y="0.2" width="11.400" height="11.600" fill="#8a8a8a"/><rect x="0.70" y="0.80" width="2.700" height="2.700" fill="#12401a"/><rect x="0.70" y="3.50" width="2.700" height="2.700" fill="#a5dca5"/><rect x="0.70" y="6.20" width="2.700" height="2.700" fill="#12401a"/><rect x="0.70" y="8.90" width="2.700" height="2.700" fill="#ffffff"/><rect x="3.40" y="0.80" width="2.700" height="2.700" fill="#a5dca5"/><rect x="3.40" y="3.50" width="2.700" height="2.700" fill="#12401a"/><rect x="3.40" y="6.20" width="2.700" height="2.700" fill="#a5dca5"/><rect x="3.40" y="8.90" width="2.700" height="2.700" fill="#1a1a1a"/><rect x="6.10" y="0.80" width="2.700" height="2.700" fill="#12401a"/><rect x="6.10" y="3.50" width="2.700" height="2.700" fill="#a5dca5"/><rect x="6.10" y="6.20" width="2.700" height="2.700" fill="#12401a"/><rect x="6.10" y="8.90" width="2.700" height="2.700" fill="#ffffff"/><rect x="8.80" y="0.80" width="2.700" height="2.700" fill="#ffffff"/><rect x="8.80" y="3.50" width="2.700" height="2.700" fill="#1a1a1a"/><rect x="8.80" y="6.20" width="2.700" height="2.700" fill="#ffffff"/><rect x="8.80" y="8.90" width="2.700" height="2.700" fill="#1a1a1a"/></svg>
<div class="abs" style="left:563.4px;top:22.2px;width:185.2px;height:158.5px;background:linear-gradient(#fdfdfd 0,#fdfdfd 8px,#f1f1f1 21px,#fff 21px);border:1px solid #8a8a8a;box-sizing:border-box;"></div>
<svg class="abs" style="left:567px;top:27px" width="14" height="13" viewBox="0 0 14 13"><path d="M1 2.2h3.6l1 1.3H11v7.3H1z" fill="#e5bf7e"/><path d="M1 2.2h3.6l1 1.3H1z" fill="#d3a55c"/><path d="M8.2 6.2v4M6.2 8.2h4" stroke="#a8601c" stroke-width="1.2"/></svg>
<svg class="abs" style="left:583px;top:27px" width="16" height="13" viewBox="-2 0 16 13"><path d="M1 2.2h3.600l1 1.300H11v7.300H1z" fill="#e5bf7e"/><path d="M1 2.2h3.600l1 1.300H1z" fill="#d3a55c"/><path d="M8.200 6.200v4M6.200 8.200h4" stroke="#a8601c" stroke-width="1.2"/><path d="M-0.600 5.600h5M-0.600 7.500h5M-0.600 9.400h5M-0.600 11.200h5" stroke="#3f8fd8" stroke-width="0.9"/></svg>
<svg class="abs" style="left:601px;top:27px" width="13" height="13" viewBox="0 0 13 13"><path d="M1.800 1.600L11 10.800M11 1.600L1.800 10.800" stroke="#e8262a" stroke-width="1.9" fill="none"/></svg>
<div class="abs" style="left:618px;top:27px;width:1px;height:12px;background:#d5d5d5;"></div>
<svg class="abs" style="left:723px;top:29px" width="26" height="8" viewBox="0 0 26 8">
<rect x="1" y="1" width="4.500" height="4.500" fill="#444"/><path d="M7 1.700h7M9 5.400h5" stroke="#444" stroke-width="1"/>
<path d="M18.500 2.500h4.600l-2.300 2.600z" fill="#222"/></svg>
<div class="abs" style="left:564.4px;top:42.6px;width:184px;height:1px;background:#6e6e6e;"></div>
<div class="abs" style="left:564.4px;top:43.4px;width:171.6px;height:38.8px;background:#a9a9a9;border:1px solid #585858;box-sizing:border-box;"></div>
<div class="abs" style="left:566px;top:47.8px;width:41px;height:30.2px;background:#fff;"></div>
<div class="abs" style="left:737.2px;top:43.4px;width:12px;height:136.8px;background:#f1f1f1;"></div>
<div class="abs" style="left:742.3px;top:54.8px;width:1.3px;height:54.5px;background:#858585;"></div>
<div class="abs" style="left:0;top:0;width:750px;height:179.8px;overflow:hidden"><svg class="abs" style="left:0;top:0" width="750" height="181" viewBox="0 0 750 181"><defs><pattern id="ht" width="2" height="2" patternUnits="userSpaceOnUse"><rect width="2" height="2" fill="#d2d2d2"/><rect width="1" height="1" fill="#484848"/><rect x="1" y="1" width="1" height="1" fill="#484848"/></pattern></defs><polygon fill="url(#ht)" points="568,48.6 595.9,48.4 595.6,67.3 566.8,68.2"/><polygon fill="url(#ht)" points="578.1,88.6 606.4,88.3 606.4,108.2 576.1,107.8"/><polygon fill="url(#ht)" points="567.9,137 596.3,135.7 596.3,156.3 566.8,156.9"/><polygon fill="url(#ht)" points="577,176.2 606,176 606,181 577,181"/><g transform="translate(0,0.0)"><polygon points="717.500,77.600 723,69.600 735,73.200 724,80.600" fill="#f4f4f4" stroke="#dcdcdc" stroke-width="0.600"/><polygon fill="#1a1a1a" stroke="#1a1a1a" stroke-width="0.500" points="719.5,78.1 721.1,76.3 722.8,77.0 720.9,78.8"/><polygon fill="#1a1a1a" stroke="#1a1a1a" stroke-width="0.500" points="722.3,79.4 724.6,77.7 726.4,78.3 723.8,80.0"/><polygon fill="#1a1a1a" stroke="#1a1a1a" stroke-width="0.500" points="719.3,75.6 720.6,73.8 722.7,74.5 721.1,76.3"/><polygon fill="#1a1a1a" stroke="#1a1a1a" stroke-width="0.500" points="722.8,77.0 724.8,75.2 726.9,75.9 724.6,77.7"/><polygon fill="#1a1a1a" stroke="#1a1a1a" stroke-width="0.500" points="722.7,74.5 724.3,72.7 726.8,73.4 724.8,75.2"/><polygon fill="#1a1a1a" stroke="#1a1a1a" stroke-width="0.500" points="726.9,75.9 729.2,74.2 731.6,75.0 729.0,76.7"/><polygon fill="#1a1a1a" stroke="#1a1a1a" stroke-width="0.500" points="721.9,71.9 723.2,70.0 726.0,70.8 724.3,72.7"/><polygon fill="#1a1a1a" stroke="#1a1a1a" stroke-width="0.500" points="726.8,73.4 728.7,71.7 731.5,72.5 729.2,74.2"/><path d="M714.300 72.600 L716.800 76.600 Q722 66 728.200 60.800" stroke="#12e612" stroke-width="3" fill="none" stroke-linejoin="round" stroke-linecap="round"/></g><g transform="translate(0,39.8)"><polygon points="717.500,77.600 723,69.600 735,73.200 724,80.600" fill="#f4f4f4" stroke="#dcdcdc" stroke-width="0.600"/><polygon fill="#1a1a1a" stroke="#1a1a1a" stroke-width="0.500" points="719.5,78.1 721.1,76.3 722.8,77.0 720.9,78.8"/><polygon fill="#1a1a1a" stroke="#1a1a1a" stroke-width="0.500" points="722.3,79.4 724.6,77.7 726.4,78.3 723.8,80.0"/><polygon fill="#1a1a1a" stroke="#1a1a1a" stroke-width="0.500" points="719.3,75.6 720.6,73.8 722.7,74.5 721.1,76.3"/><polygon fill="#1a1a1a" stroke="#1a1a1a" stroke-width="0.500" points="722.8,77.0 724.8,75.2 726.9,75.9 724.6,77.7"/><polygon fill="#1a1a1a" stroke="#1a1a1a" stroke-width="0.500" points="722.7,74.5 724.3,72.7 726.8,73.4 724.8,75.2"/><polygon fill="#1a1a1a" stroke="#1a1a1a" stroke-width="0.500" points="726.9,75.9 729.2,74.2 731.6,75.0 729.0,76.7"/><polygon fill="#1a1a1a" stroke="#1a1a1a" stroke-width="0.500" points="721.9,71.9 723.2,70.0 726.0,70.8 724.3,72.7"/><polygon fill="#1a1a1a" stroke="#1a1a1a" stroke-width="0.500" points="726.8,73.4 728.7,71.7 731.5,72.5 729.2,74.2"/><path d="M714.300 72.600 L716.800 76.600 Q722 66 728.200 60.800" stroke="#12e612" stroke-width="3" fill="none" stroke-linejoin="round" stroke-linecap="round"/></g><g transform="translate(0,79.6)"><polygon points="717.500,77.600 723,69.600 735,73.200 724,80.600" fill="#f4f4f4" stroke="#dcdcdc" stroke-width="0.600"/><polygon fill="#1a1a1a" stroke="#1a1a1a" stroke-width="0.500" points="719.5,78.1 721.1,76.3 722.8,77.0 720.9,78.8"/><polygon fill="#1a1a1a" stroke="#1a1a1a" stroke-width="0.500" points="722.3,79.4 724.6,77.7 726.4,78.3 723.8,80.0"/><polygon fill="#1a1a1a" stroke="#1a1a1a" stroke-width="0.500" points="719.3,75.6 720.6,73.8 722.7,74.5 721.1,76.3"/><polygon fill="#1a1a1a" stroke="#1a1a1a" stroke-width="0.500" points="722.8,77.0 724.8,75.2 726.9,75.9 724.6,77.7"/><polygon fill="#1a1a1a" stroke="#1a1a1a" stroke-width="0.500" points="722.7,74.5 724.3,72.7 726.8,73.4 724.8,75.2"/><polygon fill="#1a1a1a" stroke="#1a1a1a" stroke-width="0.500" points="726.9,75.9 729.2,74.2 731.6,75.0 729.0,76.7"/><polygon fill="#1a1a1a" stroke="#1a1a1a" stroke-width="0.500" points="721.9,71.9 723.2,70.0 726.0,70.8 724.3,72.7"/><polygon fill="#1a1a1a" stroke="#1a1a1a" stroke-width="0.500" points="726.8,73.4 728.7,71.7 731.5,72.5 729.2,74.2"/><path d="M714.300 72.600 L716.800 76.600 Q722 66 728.200 60.800" stroke="#12e612" stroke-width="3" fill="none" stroke-linejoin="round" stroke-linecap="round"/></g><g transform="translate(0,119.4)"><polygon points="717.500,77.600 723,69.600 735,73.200 724,80.600" fill="#f4f4f4" stroke="#dcdcdc" stroke-width="0.600"/><polygon fill="#1a1a1a" stroke="#1a1a1a" stroke-width="0.500" points="719.5,78.1 721.1,76.3 722.8,77.0 720.9,78.8"/><polygon fill="#1a1a1a" stroke="#1a1a1a" stroke-width="0.500" points="722.3,79.4 724.6,77.7 726.4,78.3 723.8,80.0"/><polygon fill="#1a1a1a" stroke="#1a1a1a" stroke-width="0.500" points="719.3,75.6 720.6,73.8 722.7,74.5 721.1,76.3"/><polygon fill="#1a1a1a" stroke="#1a1a1a" stroke-width="0.500" points="722.8,77.0 724.8,75.2 726.9,75.9 724.6,77.7"/><polygon fill="#1a1a1a" stroke="#1a1a1a" stroke-width="0.500" points="722.7,74.5 724.3,72.7 726.8,73.4 724.8,75.2"/><polygon fill="#1a1a1a" stroke="#1a1a1a" stroke-width="0.500" points="726.9,75.9 729.2,74.2 731.6,75.0 729.0,76.7"/><polygon fill="#1a1a1a" stroke="#1a1a1a" stroke-width="0.500" points="721.9,71.9 723.2,70.0 726.0,70.8 724.3,72.7"/><polygon fill="#1a1a1a" stroke="#1a1a1a" stroke-width="0.500" points="726.8,73.4 728.7,71.7 731.5,72.5 729.2,74.2"/><path d="M714.300 72.600 L716.800 76.600 Q722 66 728.200 60.800" stroke="#12e612" stroke-width="3" fill="none" stroke-linejoin="round" stroke-linecap="round"/></g></svg>
<span class="t" style="left:610.4px;top:52.6px;font-size:8.2px;font-weight:bold;color:#111;letter-spacing:0.280px;" id="n0">1.png</span>
<span class="t link" style="left:609.6px;top:71.4px;font-size:8.2px;letter-spacing:-0.064px;" id="l0">Images\Chessboard_Cali...</span>
<span class="t" style="left:610.4px;top:92.4px;font-size:8.2px;font-weight:bold;color:#111;letter-spacing:0.280px;" id="n1">2.png</span>
<span class="t link" style="left:609.6px;top:111.2px;font-size:8.2px;letter-spacing:-0.064px;" id="l1">Images\Chessboard_Cali...</span>
<span class="t" style="left:610.4px;top:132.2px;font-size:8.2px;font-weight:bold;color:#111;letter-spacing:0.280px;" id="n2">3.png</span>
<span class="t link" style="left:609.6px;top:151.0px;font-size:8.2px;letter-spacing:-0.064px;" id="l2">Images\Chessboard_Cali...</span>
<span class="t" style="left:610.4px;top:172.0px;font-size:8.2px;font-weight:bold;color:#111;letter-spacing:0.280px;" id="n3">4.png</span>
</div>
<div class="abs" style="left:563.4px;top:199.3px;width:184.6px;height:331.4px;background:#f9f9f9;border:1px solid #e3e3e3;box-sizing:border-box;"></div>
<div class="abs" style="left:613.5px;top:184.8px;width:70px;height:15px;background:#f0f0f0;border:1px solid #e2e2e2;border-bottom:none;box-sizing:border-box;"></div>
<div class="abs" style="left:563.4px;top:182.6px;width:50.5px;height:17.6px;background:#f9f9f9;border:1px solid #e3e3e3;border-bottom:none;box-sizing:border-box;"></div>
<span class="t" style="left:569.0px;top:192.1px;font-size:8.2px;letter-spacing:-0.390px;" id="tab1">Parameters</span>
<span class="t" style="left:617.5px;top:192.9px;font-size:8.2px;letter-spacing:-0.255px;" id="tab2">Results &amp; Statistics</span>
<span class="t" style="left:572.6px;top:217.6px;font-size:8.2px;letter-spacing:-0.294px;" id="bp">Board Parameters:</span>
<div class="combo" style="left:579px;top:227.4px;width:151.5px;height:32.3px;border-color:#b9b9b9;"></div>
<svg class="abs" style="left:580px;top:232px" width="30" height="22" viewBox="580 232 30 22"><polygon points="586.5,235.5 607.5,238 605.5,251 583,248" fill="#fff"/><polygon fill="#111" points="586.5,235.5 589.5,235.9 588.8,238.4 585.8,238.0"/><polygon fill="#111" points="585.1,240.5 588.2,240.9 587.5,243.4 584.4,243.0"/><polygon fill="#111" points="583.7,245.5 586.9,245.9 586.2,248.4 583.0,248.0"/><polygon fill="#111" points="588.8,238.4 591.9,238.7 591.3,241.3 588.2,240.9"/><polygon fill="#111" points="587.5,243.4 590.7,243.8 590.0,246.3 586.9,245.9"/><polygon fill="#111" points="592.5,236.2 595.5,236.6 594.9,239.1 591.9,238.7"/><polygon fill="#111" points="591.3,241.3 594.4,241.7 593.8,244.2 590.7,243.8"/><polygon fill="#111" points="590.0,246.3 593.2,246.7 592.6,249.3 589.4,248.9"/><polygon fill="#111" points="594.9,239.1 598.0,239.5 597.4,242.0 594.4,241.7"/><polygon fill="#111" points="593.8,244.2 596.9,244.6 596.4,247.2 593.2,246.7"/><polygon fill="#111" points="598.5,236.9 601.5,237.3 601.0,239.9 598.0,239.5"/><polygon fill="#111" points="597.4,242.0 600.5,242.4 600.0,245.0 596.9,244.6"/><polygon fill="#111" points="596.4,247.2 599.6,247.6 599.1,250.1 595.9,249.7"/><polygon fill="#111" points="601.0,239.9 604.1,240.2 603.6,242.8 600.5,242.4"/><polygon fill="#111" points="600.0,245.0 603.2,245.4 602.7,248.0 599.6,247.6"/><polygon fill="#111" points="604.5,237.6 607.5,238.0 607.1,240.6 604.1,240.2"/><polygon fill="#111" points="603.6,242.8 606.7,243.2 606.3,245.8 603.2,245.4"/><polygon fill="#111" points="602.7,248.0 605.9,248.4 605.5,251.0 602.3,250.6"/></svg>
<span class="t" style="left:613.2px;top:244.4px;font-size:8.2px;font-weight:bold;color:#111;letter-spacing:-0.020px;" id="cb">Chessboard</span>
<svg class="abs" style="left:720px;top:241px" width="10" height="7" viewBox="0 0 10 7"><path d="M2.200 1.800L4.900 4.500L7.600 1.800" stroke="#444" stroke-width="0.9" fill="none"/></svg>
<span class="t" style="left:630.6px;top:271.9px;font-size:8.2px;letter-spacing:-0.033px;" id="w">Width:</span>
<span class="t" style="left:628.0px;top:288.4px;font-size:8.2px;letter-spacing:-0.214px;" id="h">Height:</span>
<div class="abs" style="left:660px;top:263.2px;width:70.5px;height:14.6px;background:#fff;border:1px solid #b4b4b4;box-sizing:border-box;"></div>
<div class="abs" style="left:719px;top:264.4px;width:10.5px;height:12.2px;background:#e6e6e6;"></div>
<svg class="abs" style="left:719px;top:264.4px" width="11" height="12" viewBox="0 0 11 12"><path d="M3.600 4.500h3.600L5.400 2.400zM3.600 7.700h3.600L5.400 9.800z" fill="#222"/><path d="M0 6.100h10.500" stroke="#f5f5f5" stroke-width="0.6"/></svg>
<span class="t" style="left:661.0px;top:270.8px;font-size:8.2px;letter-spacing:0.200px;" id="v25">25</span>
<div class="abs" style="left:660px;top:280.3px;width:70.5px;height:14.6px;background:#fff;border:1px solid #b4b4b4;box-sizing:border-box;"></div>
<div class="abs" style="left:719px;top:281.5px;width:10.5px;height:12.2px;background:#e6e6e6;"></div>
<svg class="abs" style="left:719px;top:281.5px" width="11" height="12" viewBox="0 0 11 12"><path d="M3.600 4.500h3.600L5.400 2.400zM3.600 7.700h3.600L5.400 9.800z" fill="#222"/><path d="M0 6.100h10.500" stroke="#f5f5f5" stroke-width="0.6"/></svg>
<span class="t" style="left:661.0px;top:287.9px;font-size:8.2px;letter-spacing:0.200px;" id="v18">18</span>
<div class="btn" style="left:660.7px;top:324.2px;width:71.2px;height:15px;border:1px solid #2c8be0;border-radius:3.500px;background:#fdfdfd;"></div>
<span class="t" style="left:680.2px;top:332.9px;font-size:8.2px;letter-spacing:-0.089px;" id="loc">Locate...</span>
<span class="t" style="left:571.2px;top:354.2px;font-size:8.2px;letter-spacing:-0.350px;" id="cp">Camera Parameters:</span>
<span class="t" style="left:633.4px;top:373.6px;font-size:8.2px;letter-spacing:-0.220px;" id="ty">Type:</span>
<div class="combo" style="left:661.2px;top:364.4px;width:70.3px;height:14px;"></div>
<span class="t" style="left:663.0px;top:372.5px;font-size:8.2px;letter-spacing:-0.171px;" id="pin">Pinhole</span>
<svg class="abs" style="left:720px;top:368px" width="10" height="7" viewBox="0 0 10 7"><path d="M2.200 1.800L4.900 4.500L7.600 1.800" stroke="#444" stroke-width="0.9" fill="none"/></svg>
<span class="t" style="left:608.3px;top:389.4px;font-size:8.2px;letter-spacing:-0.183px;" id="fl">Focal length [px]:</span>
<svg class="abs" style="left:670px;top:382px" width="13" height="13" viewBox="0 0 13 13"><circle cx="6.200" cy="6.100" r="5.200" fill="#1f8be8"/><text x="6.200" y="9.800" font-family="Liberation Sans, sans-serif" font-size="10.500" font-weight="bold" fill="#fff" text-anchor="middle">?</text></svg>
<div class="abs" style="left:682.2px;top:383.1px;width:8.4px;height:8.7px;background:#efefef;border:1px solid #8f8f8f;border-radius:2px;box-sizing:border-box;"></div>
<div class="abs" style="left:692.7px;top:380.8px;width:39.8px;height:13.8px;background:#f1f1f1;border:1px solid #7d7d7d;border-right-color:#bdbdbd;border-bottom-color:#bdbdbd;box-sizing:border-box;"></div>
<span class="t" style="left:702.6px;top:389.3px;font-size:8.2px;font-style:italic;color:#8a8a8a;letter-spacing:-0.150px;" id="auto">(Auto)</span>
<span class="t" style="left:601.8px;top:416.2px;font-size:8.2px;letter-spacing:-0.250px;" id="dt">Distortion type:</span>
<div class="combo" style="left:660.5px;top:407.7px;width:71.6px;height:13.8px;"></div>
<span class="t" style="left:662.4px;top:415.3px;font-size:8.2px;letter-spacing:-0.340px;" id="poly">Polynomial</span>
<svg class="abs" style="left:721px;top:411px" width="10" height="7" viewBox="0 0 10 7"><path d="M2.200 1.800L4.900 4.500L7.600 1.800" stroke="#444" stroke-width="0.9" fill="none"/></svg>
<svg class="abs" style="left:572px;top:473px" width="21" height="21" viewBox="0 0 21 21"><circle cx="10.500" cy="10.100" r="9.600" fill="#7f7f7f"/><text x="10.500" y="16.600" font-family="Liberation Sans, sans-serif" font-size="18.500" font-weight="bold" fill="#fff" text-anchor="middle">?</text></svg>
<span class="t" style="left:598.5px;top:484.8px;font-size:8.2px;letter-spacing:-0.263px;" id="st">Camera calibration model is not computed.</span>
<div class="btn" style="left:571.8px;top:504.8px;width:138.7px;height:14.8px;"></div>
<span class="t" style="left:580.0px;top:513.4px;font-size:8.2px;letter-spacing:-0.306px;" id="ccm">Compute Camera Calibration Model</span>
<div class="btn" style="left:716.9px;top:504.8px;width:14.5px;height:14.8px;"></div>
<svg class="abs" style="left:719px;top:507px" width="11" height="11" viewBox="0 0 11 11"><path d="M1.800 1.600L8.800 8.800M8.800 1.600L1.800 8.800" stroke="#e3262a" stroke-width="1.500" fill="none"/></svg>
<svg class="abs" style="left:5px;top:536px" width="13" height="13" viewBox="0 0 13 13"><circle cx="6.500" cy="6.300" r="5.300" fill="#1f8be8"/><text x="6.500" y="10" font-family="Liberation Sans, sans-serif" font-size="10.500" font-weight="bold" fill="#fff" text-anchor="middle">?</text></svg>
<div class="btn" style="left:622.5px;top:535.8px;width:56.8px;height:13.6px;background:#f6f6f6;border-color:#e3e3e3;"></div>
<span class="t" style="left:644.3px;top:543.4px;font-size:8.2px;color:#a8a8a8;letter-spacing:0.100px;" id="ok">OK</span>
<div class="btn" style="left:685.4px;top:535.7px;width:57.3px;height:13.8px;"></div>
<span class="t" style="left:700.8px;top:543.4px;font-size:8.2px;letter-spacing:-0.117px;" id="cancel">Cancel</span>
<span class="t" style="left:8.3px;top:64.8px;font-size:8.2px;color:#80d878;letter-spacing:-0.100px;" id="i0">Name: 1.png</span>
<span class="t" style="left:8.3px;top:74.7px;font-size:8.2px;color:#80d878;letter-spacing:-0.027px;" id="i1">Size: 1440x1080</span>
<span class="t" style="left:8.3px;top:84.8px;font-size:8.2px;color:#80d878;letter-spacing:-0.095px;" id="i2">X: -50.95 Y: 1219.64</span>
<div class="abs" style="left:0;top:0;width:750px;height:559px;box-sizing:border-box;border:1px solid #454545;border-radius:6px;pointer-events:none"></div>
</div>
</body></html>
